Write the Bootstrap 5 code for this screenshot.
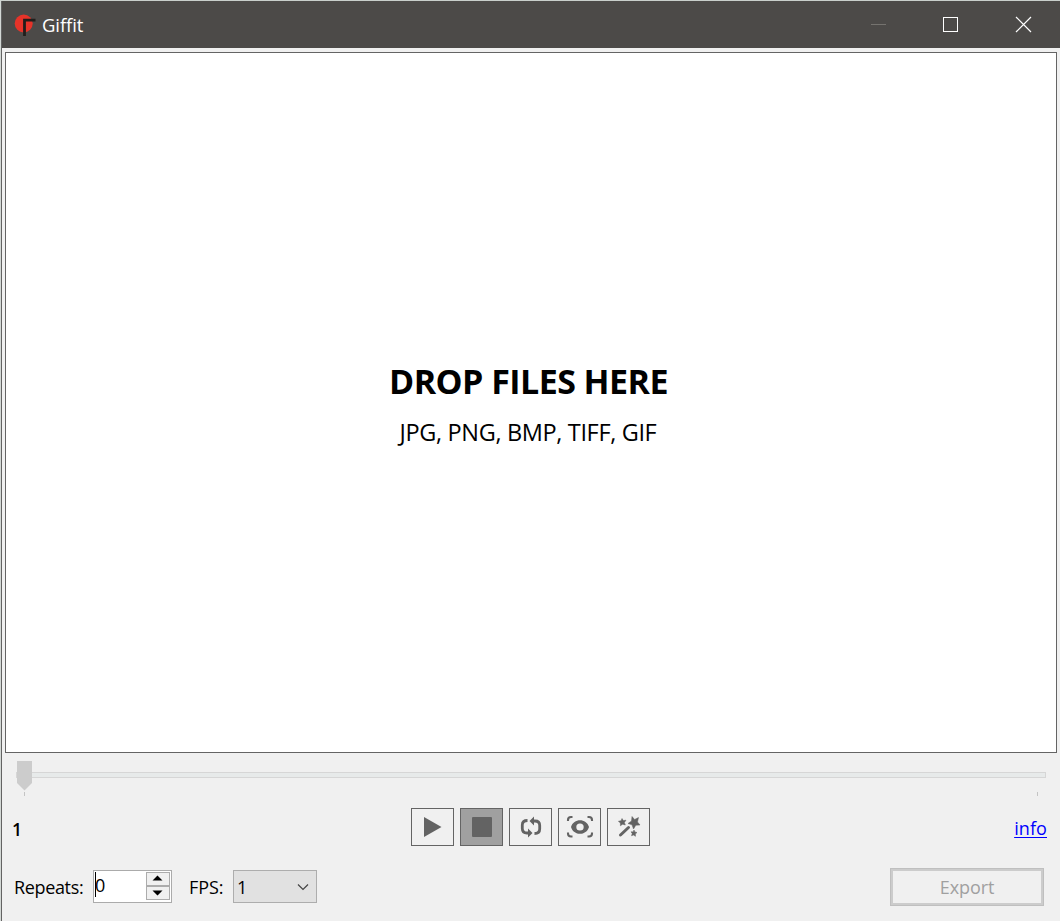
<!DOCTYPE html>
<html lang="en">
<head>
<meta charset="utf-8">
<meta name="viewport" content="width=device-width, initial-scale=1">
<title>Giffit</title>
<link rel="stylesheet" href="https://cdn.jsdelivr.net/npm/bootstrap@5.3.0/dist/css/bootstrap.min.css">
<style>
body{height:921px;width:1060px;overflow:hidden;background:#f0f0f0;color:#000;font:18px/24px "Open Sans","Noto Sans",sans-serif;border-left:1px solid #d3d8d5;border-top:1px solid #c9cfcb}
.shell{height:920px;border-left:1px solid #636363}
.titlebar{height:47px;background:#4c4a48;color:#fff;padding-left:12px}
.titlebar .app-name{margin-left:6px;font-size:18.5px;letter-spacing:-.1px}
.winbtn{width:73px;height:47px;display:block}
.drop-zone{height:701px;margin:4px 3px 0;border:1px solid #646464;background:#fff;padding:2px 5px 0 0}
.drop-title{font-size:34px;line-height:44px;font-weight:700;letter-spacing:-.55px}
.drop-types{font-size:23.5px;line-height:32px;letter-spacing:-.35px;margin-top:13px;padding-right:1px}
.track-area{height:55px}
.controls{height:38px;padding:0 13px 0 10px}
.tool{width:43px;height:38px;border:1px solid #646464;border-radius:0;padding:0;background:#f0f0f0}
.tool.pressed{background:#a0a0a0}
.side{width:100px;padding-top:2px}
.frame-no{font-weight:600;font-size:17.5px;padding-top:3px}
.info-link,.info-link:hover{color:#00f;letter-spacing:.1px;text-decoration:underline #00f 1px;text-underline-offset:2px}
.bottom{height:38px;margin-top:22px;padding:0 16px 0 12px}
.lbl{width:79px;font-size:18px;letter-spacing:-.35px;white-space:nowrap}
.fps-lbl{width:44px;margin-left:17px;letter-spacing:-.1px}
.spin{width:79px;height:33px;border:1px solid #ababab;background:#fff;padding:1px;margin-bottom:2px}
.spin .value{width:50px;height:25px;border-left:1px solid #000;line-height:27px;text-indent:-1px}
.spin svg,.fps svg{display:block}
.fps{width:84px;height:33px;border:1px solid #adadad;background:#e1e1e1;padding:2px 7px 0 3px;margin-bottom:2px}
.fps svg{margin-bottom:1px}
.export,.export:disabled{width:154px;height:38px;border:1px solid #bfbfbf;box-shadow:inset 0 0 0 2px #ccc;border-radius:0;background:#f0f0f0;color:#a0a0a0;font-size:18px;letter-spacing:-.1px;opacity:1}
</style>
<script src="https://cdn.jsdelivr.net/npm/bootstrap@5.3.0/dist/js/bootstrap.bundle.min.js"></script>
</head>
<body>
<div class="shell d-flex flex-column">
  <header class="titlebar d-flex align-items-center">
    <svg width="22" height="24" viewBox="0 0 22 24"><circle cx="9.700" cy="10.500" r="9" fill="#e63329"/><path d="M10.500 23V7.200H21.500" fill="none" stroke="#211d1b" stroke-width="2.800"/></svg>
    <span class="app-name">Giffit</span>
    <div class="d-flex ms-auto">
      <svg class="winbtn" viewBox="0 0 73 47"><path d="M30 23.500H45" stroke="#75736f"/></svg>
      <svg class="winbtn" viewBox="0 0 73 47"><rect x="29.500" y="16.500" width="14" height="14" fill="none" stroke="#fff"/></svg>
      <svg class="winbtn" viewBox="0 0 73 47"><path d="M29 16L44 31M44 16L29 31" stroke="#fff" stroke-width="1.200"/></svg>
    </div>
  </header>
  <main class="drop-zone d-flex flex-column align-items-center justify-content-center">
    <div class="drop-title">DROP FILES HERE</div>
    <div class="drop-types">JPG, PNG, BMP, TIFF, GIF</div>
  </main>
  <svg class="track-area" width="1058" height="55" viewBox="2 753 1058 55"><rect x="16.500" y="772.500" width="1029" height="5" fill="#e7eaea" stroke="#d6d6d6"/><path d="M17 761H32V783L24.500 790.500L17 783Z" fill="#ccc"/><path d="M24.500 792V796M1037.500 792V796" stroke="#c4c4c4"/></svg>
  <div class="controls d-flex align-items-center">
    <div class="side frame-no">1</div>
    <div class="d-flex" style="gap:6px;margin-left:299px">
      <button class="btn tool"><svg class="d-block" width="41" height="36" viewBox="412 809 41 36"><path d="M424 817L441.500 827L424 837Z" fill="#636363"/></svg></button>
      <button class="btn tool pressed"><svg class="d-block" width="41" height="36" viewBox="461 809 41 36"><rect x="472" y="817" width="20" height="20" rx="1" fill="#636363"/></svg></button>
      <button class="btn tool"><svg class="d-block" width="41" height="36" viewBox="510 809 41 36"><path d="M527.500 820.500Q522.300 820.500 522.300 825V828.500Q522.300 833 527 833H529M533 821H535Q539.700 821 539.700 825.500V829Q539.700 833.500 534.500 833.500" fill="none" stroke="#636363" stroke-width="2.800"/><path d="M528 828.500L532.500 833L528 837.500ZM534 816.500L529.500 821L534 825.500Z" fill="#636363"/></svg></button>
      <button class="btn tool"><svg class="d-block" width="41" height="36" viewBox="559 809 41 36"><path fill-rule="evenodd" d="M571 827C573.500 817.900 586.500 817.900 589 827C586.500 836.100 573.500 836.100 571 827ZM576.300 827A3.700 3.500 0 1 0 583.700 827A3.700 3.500 0 1 0 576.300 827Z" fill="#636363"/><path d="M568 821V820Q568 817 571 817H572.500M587.500 817H589Q592 817 592 820V821M568 832.500V833.500Q568 836.500 571 836.500H572.500M587.500 836.500H589Q592 836.500 592 833.500V832.500" stroke="#636363" stroke-width="2.100" fill="none"/></svg></button>
      <button class="btn tool"><svg class="d-block" width="41" height="36" viewBox="608 809 41 36"><g fill="#636363" stroke="#636363" stroke-width=".5"><path d="M632 816.500L634.600 819.500L638.500 817.500L637.500 822L640 825L635.800 825.200L633.500 829L632 824.800L628 823.500L631.500 821Z"/><path d="M622 818.500L623.300 820.600L626 820.200L624.400 822.500L625.300 825L622.700 824.200L620.400 825.800L620.400 823L618.400 821.300L621.100 820.700Z"/><path d="M634 830L635 832L637 832.500L635.300 834L635.500 836.300L633.500 835L631.500 835.700L632.200 833.500L631 831.800L633 831.900Z"/></g><path d="M620.500 835L628.500 827.500" stroke="#636363" stroke-width="3" stroke-linecap="round"/></svg></button>
    </div>
    <div class="side text-end ms-auto"><a class="info-link" href="#">info</a></div>
  </div>
  <footer class="bottom d-flex align-items-center">
    <span class="lbl">Repeats:</span>
    <div class="spin d-flex justify-content-between"><span class="value">0</span><svg width="25" height="29" viewBox="145 872 25 29"><rect x="146.500" y="872.500" width="23" height="13" fill="#f0f0f0" stroke="#acacac"/><rect x="146.500" y="886.500" width="23" height="13" fill="#f0f0f0" stroke="#acacac"/><path d="M152.500 880.500H162.500L157.500 875.500ZM152.500 890.500H162.500L157.500 895.500Z"/></svg></div>
    <span class="lbl fps-lbl">FPS:</span>
    <div class="fps d-flex align-items-center justify-content-between"><span>1</span><svg width="12" height="8" viewBox="0 0 12 8"><path d="M1 1.500L6 6.500L11 1.500" fill="none" stroke="#444" stroke-width="1.200"/></svg></div>
    <button class="btn export ms-auto p-0" disabled>Export</button>
  </footer>
</div>
</body>
</html>
